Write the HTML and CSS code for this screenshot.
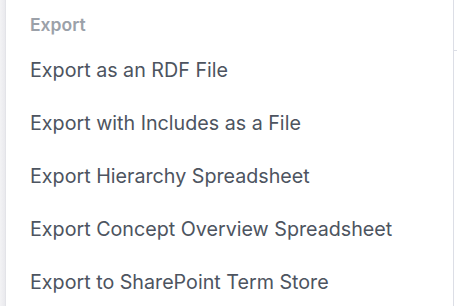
FILE: index.html
```html
<!DOCTYPE html>
<html>
<head>
<meta charset="utf-8">
<link rel="stylesheet" href="styles.css">
</head>
<body>
<div class="page">
  <div class="edge"></div>
  <div class="menu">
    <div class="header">Export</div>
    <div class="item">Export as an RDF File</div>
    <div class="item">Export with Includes as a File</div>
    <div class="item">Export Hierarchy Spreadsheet</div>
    <div class="item">Export Concept Overview Spreadsheet</div>
    <div class="item">Export to SharePoint Term Store</div>
  </div>
  <div class="outside"><div class="tick"></div></div>
</div>
</body>
</html>
```
FILE: styles.css
```css
html, body {
  margin: 0;
  padding: 0;
  background: #ffffff;
}
.page {
  display: flex;
  width: 457px;
  height: 306px;
  overflow: hidden;
  font-family: Inter, "Noto Sans", sans-serif;
}
.edge {
  width: 6px;
  flex: none;
  background: linear-gradient(to right, #f3f3f5, #eaeaee 80%, #dedfe4);
}
.menu {
  width: 448px;
  flex: none;
  border-right: 1px solid #dcdee6;
  background: #ffffff;
  padding: 0 0 0 24px;
  box-sizing: border-box;
}
.header {
  height: 44px;
  display: flex;
  align-items: center;
  padding-top: 4px;
  box-sizing: border-box;
  font-size: 17.5px;
  font-weight: 600;
  color: #9ba1a9;
}
.item {
  height: 53px;
  display: flex;
  align-items: center;
  padding-bottom: 2px;
  box-sizing: border-box;
  font-size: 19.7px;
  color: #4d5460;
}
.outside {
  flex: 1;
  position: relative;
}
.tick {
  position: absolute;
  top: 50px;
  left: 0;
  width: 3px;
  height: 1px;
  background: #dcdee6;
}
```
